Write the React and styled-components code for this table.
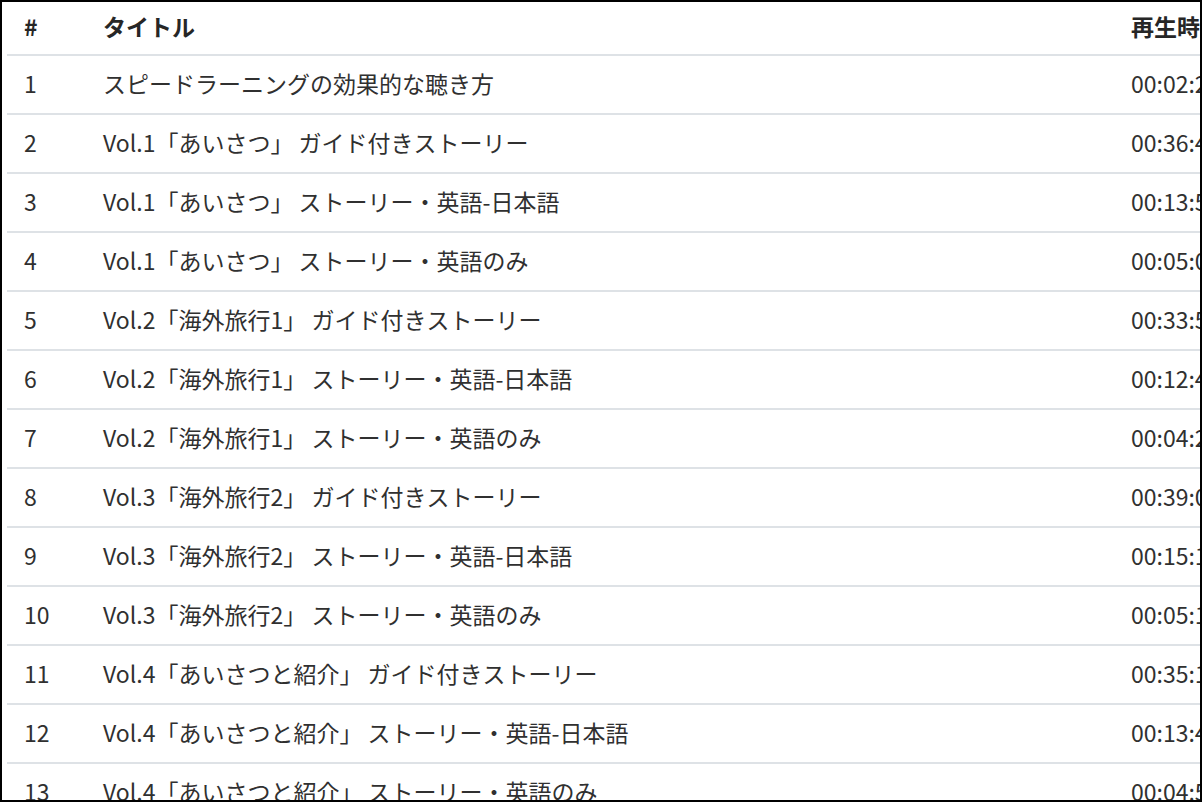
import React from "react"
import styled, { createGlobalStyle } from "styled-components"

const GlobalStyle = createGlobalStyle`
  html, body {
    margin: 0;
    padding: 0;
    background: #fff;
    overflow: hidden;
  }
  body {
    font-family: "Noto Sans CJK JP", "Noto Sans", sans-serif;
    color: #303030;
  }
`

const Frame = styled.div`
  box-sizing: border-box;
  width: 1202px;
  height: 802px;
  border: 2px solid #000;
  padding-left: 5px;
  overflow: hidden;
  background: #fff;
`

const Table = styled.table`
  border-collapse: collapse;
  width: 1260px;
  table-layout: fixed;
  font-size: 23px;
  line-height: 1.2;
`

const HeadCell = styled.th`
  height: 50px;
  padding: 0 0 2px ${(p) => p.$pad || 16}px;
  text-align: left;
  font-weight: 700;
  color: #262626;
  vertical-align: middle;
  border-bottom: 2px solid #dee2e6;
  white-space: nowrap;
  overflow: hidden;
`

const Cell = styled.td`
  height: 56px;
  padding: 0 0 1px ${(p) => p.$pad || 16}px;
  vertical-align: middle;
  border-bottom: 2px solid #dee2e6;
  white-space: nowrap;
  overflow: hidden;
`

const tracks = [
  ["スピードラーニングの効果的な聴き方", "00:02:28"],
  ["Vol.1「あいさつ」 ガイド付きストーリー", "00:36:42"],
  ["Vol.1「あいさつ」 ストーリー・英語-日本語", "00:13:55"],
  ["Vol.1「あいさつ」 ストーリー・英語のみ", "00:05:04"],
  ["Vol.2「海外旅行1」 ガイド付きストーリー", "00:33:51"],
  ["Vol.2「海外旅行1」 ストーリー・英語-日本語", "00:12:46"],
  ["Vol.2「海外旅行1」 ストーリー・英語のみ", "00:04:23"],
  ["Vol.3「海外旅行2」 ガイド付きストーリー", "00:39:07"],
  ["Vol.3「海外旅行2」 ストーリー・英語-日本語", "00:15:12"],
  ["Vol.3「海外旅行2」 ストーリー・英語のみ", "00:05:18"],
  ["Vol.4「あいさつと紹介」 ガイド付きストーリー", "00:35:19"],
  ["Vol.4「あいさつと紹介」 ストーリー・英語-日本語", "00:13:47"],
  ["Vol.4「あいさつと紹介」 ストーリー・英語のみ", "00:04:53"],
]

const App = () => {
  return (
    <>
      <GlobalStyle />
      <Frame>
        <Table>
          <colgroup>
            <col style={{ width: 80 }} />
            <col style={{ width: 1028 }} />
            <col style={{ width: 152 }} />
          </colgroup>
          <thead>
            <tr>
              <HeadCell $pad={17}>#</HeadCell>
              <HeadCell>タイトル</HeadCell>
              <HeadCell>再生時間</HeadCell>
            </tr>
          </thead>
          <tbody>
            {tracks.map(([title, time], i) => (
              <tr key={i}>
                <Cell $pad={17}>{i + 1}</Cell>
                <Cell>{title}</Cell>
                <Cell>{time}</Cell>
              </tr>
            ))}
          </tbody>
        </Table>
      </Frame>
    </>
  )
}

export default App
